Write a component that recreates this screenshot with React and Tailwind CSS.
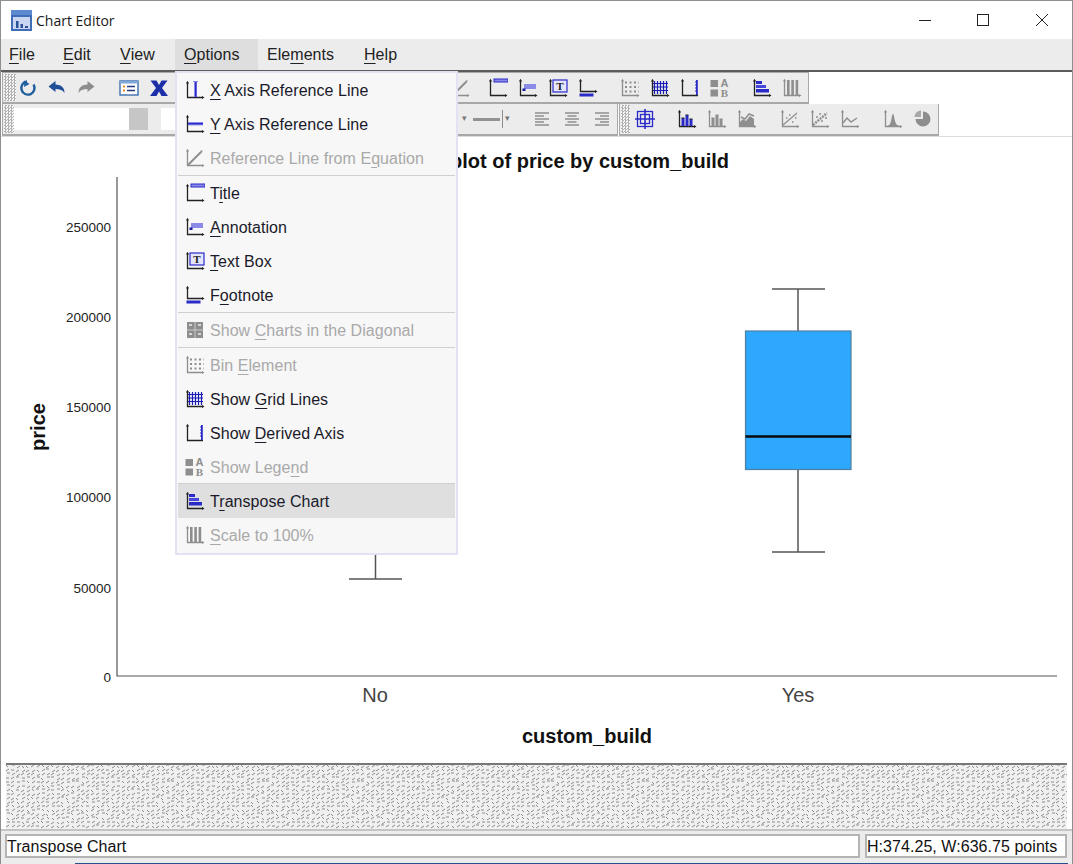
import React from 'react';

const Axes = ({ c = '#222' }) => (
  <>
    <path d="M2.5 2V17.5H18" fill="none" stroke={c} strokeWidth="1.3" />
    <path d="M1 3.5 2.5 .8 4 3.5ZM17 16 19.5 17.5 17 19Z" fill={c} />
  </>
);

const Svg = ({ children, size = 20 }) => (
  <svg width={size} height={size} viewBox="0 0 20 20" className="shrink-0">{children}</svg>
);

const gray = '#8e8e8e';
const blue = '#2a2ac8';
const soft = '#8a8ae8';

const icons = {
  xref: () => <Svg><Axes /><rect x="9" y="2" width="3" height="15" fill={soft} /><rect x="10" y="2" width="1.4" height="15" fill={blue} /><path d="M8 1.5h5" stroke={soft} /></Svg>,
  yref: () => <Svg><Axes /><rect x="3" y="8" width="15" height="3.4" fill={soft} /><rect x="3" y="9" width="15" height="1.4" fill={blue} /></Svg>,
  diag: () => <Svg><Axes c={gray} /><path d="M2.5 17.5 16 4" stroke={gray} strokeWidth="2" /><path d="M17.5 2 15 3l2 2z" fill={gray} /></Svg>,
  title: () => <Svg><Axes /><rect x="6" y="1" width="14" height="3" fill={soft} stroke={blue} strokeWidth="1" /></Svg>,
  annot: () => <Svg><Axes /><rect x="6" y="6" width="12" height="5" fill={soft} /><rect x="4.5" y="10.5" width="3" height="2.5" fill="#1c1caa" /></Svg>,
  textbox: () => <Svg><Axes /><rect x="5" y="2" width="14" height="12" fill="#e4e4fa" stroke={blue} strokeWidth="1.2" /><text x="12" y="12" textAnchor="middle" fontSize="11" fontWeight="700" fontFamily="Liberation Serif" fill="#222">T</text></Svg>,
  foot: () => <Svg><path d="M2.5 2V13.5H18" fill="none" stroke="#222" strokeWidth="1.3" /><path d="M1 3.5 2.5 .8 4 3.5ZM17 12 19.5 13.5 17 15Z" fill="#222" /><rect x="1.5" y="15.5" width="14" height="3" fill={blue} /></Svg>,
  matrix: () => <Svg><rect x="2" y="2" width="16" height="16" fill={gray} /><path d="M10 2v16M2 10h16" stroke="#c8c8c8" /><path d="M4 5h3M13 5h3M4 14h3M13 14h3" stroke="#d4d4d4" strokeWidth="2" /></Svg>,
  bin: () => <Svg><Axes c={gray} /><path d="M5 4.5h14M5 9h14M5 13.5h14" stroke={gray} strokeWidth="2" strokeDasharray="2 2.5" /></Svg>,
  grid: () => <Svg><path d="M4.5 3v13M7.5 3v13M10.5 3v13M13.5 3v13M16.5 3v13M3 5.5h15M3 9h15M3 12.5h15" stroke="#1a1ab4" strokeWidth="1.2" /><Axes /></Svg>,
  derived: () => <Svg><path d="M2.5 2V17.5H18" fill="none" stroke="#222" strokeWidth="1.3" /><path d="M1 3.5 2.5 .8 4 3.5Z" fill="#222" /><rect x="16" y="2" width="1.8" height="15" fill={blue} /><path d="M15 4h1M15 7h1M15 10h1M15 13h1" stroke={blue} /></Svg>,
  legend: () => (
    <Svg>
      <rect x="0.500" y="2" width="7.500" height="7" fill={gray} /><rect x="0.500" y="11.500" width="7.500" height="7" fill={gray} />
      <text x="14.500" y="9" textAnchor="middle" fontSize="11" fontWeight="700" fontFamily="Liberation Sans" fill={gray}>A</text>
      <text x="14.500" y="19" textAnchor="middle" fontSize="11" fontWeight="700" fontFamily="Liberation Serif" fill={gray}>B</text>
    </Svg>
  ),
  transpose: () => <Svg><Axes /><rect x="4" y="3" width="6" height="3" fill={blue} /><rect x="4" y="7" width="10" height="3" fill="#4646dc" /><rect x="4" y="11" width="13" height="3.5" fill={blue} /></Svg>,
  scale: () => <Svg><Axes c={gray} /><rect x="5" y="2" width="2.6" height="15" fill={gray} /><rect x="9.3" y="2" width="2.6" height="15" fill={gray} /><rect x="13.6" y="2" width="2.6" height="15" fill={gray} /></Svg>,
  reload: () => <Svg><path d="M15.5 6.5A6.6 6.6 0 1 1 9 3.5" fill="none" stroke="#1f5f9e" strokeWidth="2.4" /><path d="M3.5 2.5 3 9l5.5-3z" fill="#1f5f9e" transform="translate(3 0)" /></Svg>,
  undo: ({ c = '#1f4f96' }) => <Svg><path d="M1.5 8.5 8.5 3v3.5c6 0 9 3.5 9 8.5-2-3-4.500-4-9-4V14z" fill={c} /></Svg>,
  redo: () => <Svg><path d="M18.500 8.500 11.500 3v3.500c-6 0-9 3.500-9 8.500 2-3 4.500-4 9-4V14z" fill="#8d8d8d" /></Svg>,
  props: () => <Svg><rect x="1" y="3" width="18" height="14" fill="#fff" stroke="#3b70b0" strokeWidth="1.4" /><rect x="1" y="3" width="18" height="2.500" fill="#7ea6d8" /><path d="M4 8.500h2M4 12.500h2" stroke="#e88a1a" strokeWidth="2" /><path d="M8 8.500h8M8 12.500h8" stroke="#243a80" strokeWidth="1.500" /></Svg>,
  bigx: () => <Svg><path d="M1.500 2.500h6l2.500 4.500 2.500-4.500h6L13 10l6 8h-6.500L10 13.500 7.500 18H1l6-8z" fill="#1c2fa8" /></Svg>,
  cross: () => <Svg><rect x="2.500" y="2.500" width="15" height="15" fill="none" stroke={blue} strokeWidth="1.300" /><rect x="5.500" y="5.500" width="9" height="9" fill="none" stroke={blue} strokeWidth="1.300" /><path d="M10 0v20M0 10h20" stroke={blue} strokeWidth="1.600" /></Svg>,
  bars: ({ c = blue }) => <Svg><Axes c={c === blue ? '#222' : gray} /><path d="M6 17V9M10 17V6M14 17V10" stroke={c} strokeWidth="3" /><path d="M4.500 9h3M8.500 6h3M12.500 10h3" stroke={c === blue ? '#222' : gray} /></Svg>,
  area: () => <Svg><Axes c={gray} /><path d="M3 17V13l3-3 3 2 4-5 4 3v7z" fill={gray} /><path d="M4 8l4 2 4-5 5 2" fill="none" stroke={gray} strokeWidth="1.500" /></Svg>,
  scatter: () => <Svg><Axes c={gray} /><path d="M3 16 17 4" stroke={gray} strokeWidth="1.200" /><path d="M6 9h1.500M9 6h1.500M12 13h1.500M15 9h1.500" stroke={gray} strokeWidth="1.500" /></Svg>,
  scatter2: () => <Svg><Axes c={gray} /><path d="M3 16 17 4" stroke={gray} strokeWidth="2.500" strokeDasharray="2 1" /><path d="M6 8h2M9 5h2M11 12h2M15 9h2" stroke={gray} strokeWidth="1.500" /></Svg>,
  line: () => <Svg><Axes c={gray} /><path d="M3 14l4-5 4 4 6-4" fill="none" stroke={gray} strokeWidth="1.500" /></Svg>,
  hump: () => <Svg><Axes c={gray} /><path d="M3 17c3 0 4-1 5-5s1-7 2-7 1 3 2 7 3 5 6 5z" fill={gray} /></Svg>,
  pie: () => <Svg><path d="M10 2.500a7.500 7.500 0 1 1-7.500 7.500H10z" fill={gray} /><path d="M8 1.500v6.500H1.500A6.500 6.500 0 0 1 8 1.500z" fill="#a8a8a8" /></Svg>,
  alignL: () => <Svg><path d="M3 4h14M3 7h9M3 10h14M3 13h9M3 16h14" stroke={gray} strokeWidth="1.300" /></Svg>,
  alignC: () => <Svg><path d="M3 4h14M5.500 7h9M3 10h14M5.500 13h9M3 16h14" stroke={gray} strokeWidth="1.300" /></Svg>,
  alignR: () => <Svg><path d="M3 4h14M8 7h9M3 10h14M8 13h9M3 16h14" stroke={gray} strokeWidth="1.300" /></Svg>,
};

const Cell = ({ name, className = 'w-[30px]' }) => {
  const Icon = icons[name];
  return <div className={`${className} flex items-center justify-center shrink-0`}><Icon /></div>;
};

const Grip = ({ className }) => (
  <div className={`${className} shrink-0 bg-[repeating-conic-gradient(#b2b2b2_0_25%,#f8f8f8_0_50%)] bg-[length:3px_3px]`} />
);

// mnemonic underline inside a label
const U = ({ children }) => <span className="underline underline-offset-[3px] decoration-1">{children}</span>;

const TopMenu = ({ active, children, className = '' }) => (
  <div className={`h-full flex items-center ${active ? 'bg-[#dedede]' : ''} ${className}`}>{children}</div>
);

const MenuRow = ({ icon, off, on, children }) => {
  const Icon = icons[icon];
  return (
    <div className={`h-[34px] flex items-center pl-[7px] ${on ? 'bg-[#dfdfdf]' : ''} ${off ? 'text-[#a9a9a9]' : 'text-[#1a1a2a]'}`}>
      <Icon />
      <span className="ml-[5px] mt-px">{children}</span>
    </div>
  );
};

const Sep = ({ className = '' }) => <div className={`h-px bg-[#cfcfcf] ${className}`} />;

const OptionsMenu = () => (
  <div className="absolute left-[174px] top-[71px] w-[283px] h-[484px] bg-[#f7f7f7] border-2 border-[#e2e2f4] px-px text-[16px] tracking-[0.05px] z-10">
    <MenuRow icon="xref"><U>X</U> Axis Reference Line</MenuRow>
    <MenuRow icon="yref"><U>Y</U> Axis Reference Line</MenuRow>
    <MenuRow icon="diag" off>Reference Line from E<U>q</U>uation</MenuRow>
    <Sep />
    <MenuRow icon="title">T<U>i</U>tle</MenuRow>
    <MenuRow icon="annot"><U>A</U>nnotation</MenuRow>
    <MenuRow icon="textbox"><U>T</U>ext Box</MenuRow>
    <MenuRow icon="foot">F<U>o</U>otnote</MenuRow>
    <Sep />
    <MenuRow icon="matrix" off>Show <U>C</U>harts in the Diagonal</MenuRow>
    <Sep />
    <MenuRow icon="bin" off>Bin <U>E</U>lement</MenuRow>
    <MenuRow icon="grid">Show <U>G</U>rid Lines</MenuRow>
    <MenuRow icon="derived">Show <U>D</U>erived Axis</MenuRow>
    <MenuRow icon="legend" off>Show Lege<U>n</U>d</MenuRow>
    <Sep className="-mt-px" />
    <MenuRow icon="transpose" on>T<U>r</U>anspose Chart</MenuRow>
    <MenuRow icon="scale" off><U>S</U>cale to 100%</MenuRow>
  </div>
);

const BoxChart = () => (
  <svg viewBox="1 137 1071 626" className="w-full h-full block" fontFamily="Liberation Sans">
    <path d="M117 177V676H1057" fill="none" stroke="#555" strokeWidth="1.200" />
    {[['250000', 232], ['200000', 322], ['150000', 412], ['100000', 502], ['50000', 593], ['0', 682]].map(([t, y]) => (
      <text key={t} x="111" y={y} textAnchor="end" fontSize="13.500" fill="#222">{t}</text>
    ))}
    <text x="729" y="168" textAnchor="end" fontSize="20" fontWeight="700" fill="#111">Boxplot of price by custom_build</text>
    <text transform="translate(45 427) rotate(-90)" textAnchor="middle" fontSize="20" fontWeight="700" fill="#111">price</text>
    <text x="587" y="742.500" textAnchor="middle" fontSize="20" fontWeight="700" fill="#111">custom_build</text>
    <text x="375" y="702" textAnchor="middle" fontSize="20" fill="#444">No</text>
    <text x="798" y="702" textAnchor="middle" fontSize="20" fill="#444">Yes</text>
    <path d="M375.500 550V579M349 579H402" stroke="#555" strokeWidth="1.500" fill="none" />
    <path d="M798 289V331M798 469V552M772 289H825M772 552H825" stroke="#555" strokeWidth="1.500" fill="none" />
    <rect x="745.500" y="331" width="105.500" height="138.500" fill="#2ea8ff" stroke="#4f7f9f" strokeWidth="1.200" />
    <path d="M745.500 436.500H851" stroke="#0a0a0a" strokeWidth="2.500" />
  </svg>
);

// noise tile for the grey band under the chart, jittered on a grid so it stays even
const tileStrokes = (() => {
  let seed = 17;
  const rnd = () => {
    seed = (seed * 16807) % 2147483647;
    return seed / 2147483647;
  };
  const out = [];
  for (let gy = 0; gy < 64; gy += 4) {
    for (let gx = 0; gx < 95; gx += 5) {
      const x = gx + Math.floor(rnd() * 2);
      const y = gy + Math.floor(rnd() * 2);
      const k = rnd();
      out.push(k < 0.6 ? `M${x} ${y + 2}l3 -2` : k < 0.8 ? `M${x} ${y}h3` : `M${x} ${y}l2 2`);
    }
  }
  return out.join('');
})();

const Texture = () => (
  <svg className="w-full h-full block">
    <defs>
      <pattern id="noise" width="95" height="64" patternUnits="userSpaceOnUse">
        <rect width="95" height="64" fill="#f0f0f0" />
        <path d={tileStrokes} stroke="#8c8c8c" strokeWidth="1" fill="none" />
      </pattern>
    </defs>
    <rect width="100%" height="100%" fill="url(#noise)" />
  </svg>
);

export default function App() {
  return (
    <div className="relative w-[1073px] h-[864px] overflow-hidden flex flex-col bg-white border-x border-[#8f8f8f] font-['Liberation_Sans',sans-serif] text-[#111]">
      {/* title bar */}
      <div className="h-[39px] shrink-0 border-t border-[#8f8f8f] flex items-center pl-[10px] bg-white">
        <svg width="21" height="21" viewBox="0 0 21 21" className="shrink-0">
          <rect width="21" height="21" fill="#3f6db8" />
          <rect x="0" y="0" width="21" height="5" fill="#5c8ad0" />
          <rect x="2" y="7" width="17" height="12" fill="#c8d6f2" />
          <path d="M5 18V11h2.500v7ZM9.500 18v-4H12v4ZM14 18v-2h3v2Z" fill="#2c4f9a" />
        </svg>
        <span className="ml-[4px] text-[14px] font-['Open_Sans',sans-serif] text-[#1a1a1a]">Chart Editor</span>
        <svg width="130" height="20" viewBox="0 0 130 20" className="ml-auto mr-[23px]" stroke="#222" fill="none">
          <path d="M0 10.500H12" />
          <rect x="58.500" y="4.500" width="11" height="11" />
          <path d="M117 4 129 16M129 4 117 16" />
        </svg>
      </div>

      {/* menu bar */}
      <div className="h-[31px] shrink-0 flex bg-[#ececec] text-[16px] tracking-[0.05px] text-[#222]">
        <TopMenu className="ml-[8px] w-[54px]"><U>F</U>ile</TopMenu>
        <TopMenu className="w-[57px]"><U>E</U>dit</TopMenu>
        <TopMenu className="w-[55px]"><U>V</U>iew</TopMenu>
        <TopMenu active className="w-[83px] pl-[9px]"><U>O</U>ptions</TopMenu>
        <TopMenu className="w-[106px] pl-[9px]">Ele<U>m</U>ents</TopMenu>
        <TopMenu><U>H</U>elp</TopMenu>
      </div>
      <div className="h-[2px] shrink-0 bg-[#5c5c5c]" />

      {/* toolbar 1 */}
      <div className="h-[32px] shrink-0 flex">
        <div className="w-[807px] ml-px flex bg-[#ececec] border-t border-x border-b-2 border-[#a8a8a8] pl-px py-px">
          <Grip className="w-[12px]" />
          <Cell name="reload" className="w-[24px]" />
          <Cell name="undo" className="w-[34px]" />
          <Cell name="redo" className="w-[24px]" />
          <div className="w-[16px]" />
          <Cell name="props" />
          <Cell name="bigx" />
          <div className="w-[271px]" />
          <Cell name="diag" />
          <div className="w-[8px]" />
          <Cell name="title" />
          <Cell name="annot" />
          <Cell name="textbox" />
          <Cell name="foot" />
          <div className="w-[12px]" />
          <Cell name="bin" />
          <Cell name="grid" />
          <Cell name="derived" />
          <Cell name="legend" />
          <div className="w-[12px]" />
          <Cell name="transpose" />
          <Cell name="scale" />
        </div>
      </div>

      {/* toolbar 2 */}
      <div className="h-[32px] shrink-0 flex ml-px">
        <div className="w-[616px] flex items-stretch bg-[#ececec] border-b-2 border-x border-[#a8a8a8] pl-px py-px">
          <Grip className="w-[10px]" />
          <div className="w-[115px] my-[3px] bg-white" />
          <div className="w-[19px] my-[3px] bg-[#c6c6c6]" />
          <div className="w-[13px]" />
          <div className="w-[30px] my-[3px] bg-white" />
          <div className="w-[272px]" />
          <div className="w-[11px] flex items-center text-[9px] text-[#777]">▾</div>
          <div className="w-[29px] flex items-center">
            <div className="w-[27px] h-[3px] bg-[#929292]" />
          </div>
          <div className="w-px my-[5px] bg-[#8e8e8e]" />
          <div className="w-[24px] flex items-center pl-[2px] text-[9px] text-[#777]">▾</div>
          <Cell name="alignL" />
          <Cell name="alignC" />
          <Cell name="alignR" />
        </div>
        <div className="w-[320px] ml-px flex bg-[#ececec] border-b-2 border-x border-[#a8a8a8] pl-px py-px">
          <Grip className="w-[9px]" />
          <Cell name="cross" />
          <div className="w-[12px]" />
          <Cell name="bars" />
          <div className="w-[30px] flex items-center justify-center"><icons.bars c={gray} /></div>
          <Cell name="area" />
          <div className="w-[13px]" />
          <Cell name="scatter" />
          <Cell name="scatter2" />
          <Cell name="line" />
          <div className="w-[13px]" />
          <Cell name="hump" />
          <Cell name="pie" />
        </div>
      </div>
      <div className="h-px shrink-0 bg-[#dcdcdc]" />

      {/* chart */}
      <div className="flex-1 min-h-0">
        <BoxChart />
      </div>

      {/* textured band */}
      <div className="h-[66px] shrink-0 px-[5px] bg-white">
        <div className="h-full border-t-2 border-[#777]">
          <Texture />
        </div>
      </div>

      {/* status bar */}
      <div className="h-[35px] shrink-0 flex gap-[5px] bg-[#ececec] border-t-2 border-[#c4c4c4] px-[4px] pt-[3px] pb-[6px] text-[16px] tracking-[0.05px]">
        <div className="w-[855px] border-2 border-[#b4b4b4] bg-white flex items-center pt-px">Transpose Chart</div>
        <div className="w-[202px] border-2 border-[#b4b4b4] bg-white flex items-center pt-px">H:374.25, W:636.75 points</div>
      </div>
      <div className="absolute left-[74px] right-[4px] bottom-0 h-px bg-[#2a4f8a]" />

      <OptionsMenu />
    </div>
  );
}
